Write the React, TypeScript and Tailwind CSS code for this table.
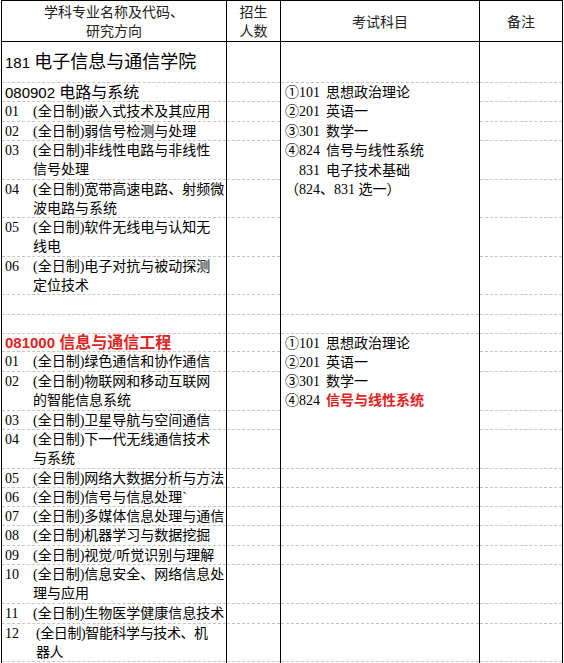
import React from "react";

const dash = "border-b border-dashed border-[#c6c6c6]";
const red = "text-[#e02424] font-bold";

type Exam = "skip" | { span: number; body: React.ReactNode } | undefined;

interface Row {
  h: number;
  left: React.ReactNode;
  exam?: Exam;
}

const Item = ({ no, lines, shift }: { no: string; lines: string[]; shift?: boolean }) => (
  <div className="flex text-[14px] leading-[19px]">
    <span className="w-[28px] shrink-0">{no}</span>
    <div className={shift ? "whitespace-nowrap pl-[3px] tracking-[-0.4px]" : "whitespace-nowrap"}>
      {lines.map((l, i) => (
        <div key={i}>{l}</div>
      ))}
    </div>
  </div>
);

const ExamLine = ({ mark, code, children }: { mark: string; code: string; children: React.ReactNode }) => (
  <div className="flex whitespace-nowrap">
    <span>{mark}</span>
    <span>{code}</span>
    <span className="ml-[6px]">{children}</span>
  </div>
);

const block1 = (
  <div className="pl-[4px] text-[14px] leading-[19.4px]">
    <ExamLine mark="①" code="101">思想政治理论</ExamLine>
    <ExamLine mark="②" code="201">英语一</ExamLine>
    <ExamLine mark="③" code="301">数学一</ExamLine>
    <ExamLine mark="④" code="824">信号与线性系统</ExamLine>
    <ExamLine mark="　" code="831">电子技术基础</ExamLine>
    <div className="whitespace-nowrap">（824、831 选一）</div>
  </div>
);

const block2 = (
  <div className="pl-[4px] text-[14px] leading-[19px]">
    <ExamLine mark="①" code="101">思想政治理论</ExamLine>
    <ExamLine mark="②" code="201">英语一</ExamLine>
    <ExamLine mark="③" code="301">数学一</ExamLine>
    <ExamLine mark="④" code="824">
      <span className={red}>信号与线性系统</span>
    </ExamLine>
  </div>
);

const rows: Row[] = [
  {
    h: 41,
    left: (
      <div className="whitespace-nowrap">
        <span className="font-['Liberation_Sans'] text-[15px]">181 </span>
        <span className="text-[18px]">电子信息与通信学院</span>
      </div>
    ),
  },
  {
    h: 19,
    left: (
      <div className="whitespace-nowrap leading-[19px]">
        <span className="font-['Liberation_Sans'] text-[15px]">080902 </span>
        <span className="text-[16px]">电路与系统</span>
      </div>
    ),
    exam: { span: 8, body: block1 },
  },
  { h: 20, left: <Item no="01" lines={["(全日制)嵌入式技术及其应用"]} />, exam: "skip" },
  { h: 19, left: <Item no="02" lines={["(全日制)弱信号检测与处理"]} />, exam: "skip" },
  { h: 39, left: <Item no="03" lines={["(全日制)非线性电路与非线性", "信号处理"]} />, exam: "skip" },
  { h: 38, left: <Item no="04" lines={["(全日制)宽带高速电路、射频微", "波电路与系统"]} />, exam: "skip" },
  { h: 39, left: <Item no="05" lines={["(全日制)软件无线电与认知无", "线电"]} />, exam: "skip" },
  { h: 38, left: <Item no="06" lines={["(全日制)电子对抗与被动探测", "定位技术"]} />, exam: "skip" },
  { h: 20, left: null },
  { h: 19, left: null },
  {
    h: 18,
    left: (
      <div className={`whitespace-nowrap leading-[18px] ${red}`}>
        <span className="font-['Liberation_Sans'] text-[15px]">081000 </span>
        <span className="text-[16px]">信息与通信工程</span>
      </div>
    ),
    exam: { span: 5, body: block2 },
  },
  { h: 20, left: <Item no="01" lines={["(全日制)绿色通信和协作通信"]} />, exam: "skip" },
  { h: 39, left: <Item no="02" lines={["(全日制)物联网和移动互联网", "的智能信息系统"]} />, exam: "skip" },
  { h: 19, left: <Item no="03" lines={["(全日制)卫星导航与空间通信"]} />, exam: "skip" },
  { h: 39, left: <Item no="04" lines={["(全日制)下一代无线通信技术", "与系统"]} />, exam: "skip" },
  { h: 19, left: <Item no="05" lines={["(全日制)网络大数据分析与方法"]} /> },
  { h: 19, left: <Item no="06" lines={["(全日制)信号与信息处理`"]} /> },
  { h: 19, left: <Item no="07" lines={["(全日制)多媒体信息处理与通信"]} /> },
  { h: 20, left: <Item no="08" lines={["(全日制)机器学习与数据挖掘"]} /> },
  { h: 19, left: <Item no="09" lines={["(全日制)视觉/听觉识别与理解"]} /> },
  { h: 39, left: <Item no="10" lines={["(全日制)信息安全、网络信息处", "理与应用"]} /> },
  { h: 20, left: <Item no="11" lines={["(全日制)生物医学健康信息技术"]} /> },
  { h: 38, left: <Item no="12" lines={["(全日制)智能科学与技术、机", "器人"]} shift /> },
  { h: 20, left: null },
];

export default function App() {
  return (
    <div className="h-[663px] w-[564px] overflow-hidden bg-white font-['Liberation_Serif','Noto_Sans_CJK_SC',sans-serif] text-black">
      <table className="ml-[1px] table-fixed border-collapse border-t border-black">
        <colgroup>
          <col className="w-[225px] border-l border-r border-black" />
          <col className="w-[54px] border-l border-r border-black" />
          <col className="w-[199px] border-l border-r border-black" />
          <col className="w-[83px] border-l border-r border-black" />
        </colgroup>
        <thead>
          <tr className="h-[40px]">
            <th className="border-b border-black p-0 pt-[2px] align-top text-[14px] font-normal leading-[19px] text-[#222]">
              学科专业名称及代码、
              <br />
              研究方向
            </th>
            <th className="border-b border-black p-0 pt-[2px] align-top text-[14px] font-normal leading-[19px] text-[#222]">
              招生
              <br />
              人数
            </th>
            <th className="border-b border-black p-0 pt-[12px] align-top text-[14px] font-normal leading-[19px] text-[#222]">
              考试科目
            </th>
            <th className="border-b border-black p-0 pt-[12px] align-top text-[14px] font-normal leading-[19px] text-[#222]">
              备注
            </th>
          </tr>
        </thead>
        <tbody>
          {rows.map((r, i) => (
            <tr key={i} style={{ height: r.h }}>
              <td className={`${dash} p-0 pl-[3px]`}>
                {/* fixed box so the text never pushes the row taller */}
                <div className="flex items-center" style={{ height: r.h - 1 }}>
                  {r.left}
                </div>
              </td>
              <td className={`${dash} p-0`} />
              {r.exam === "skip" ? null : r.exam ? (
                <td rowSpan={r.exam.span} className={`${dash} p-0 align-top`}>
                  {r.exam.body}
                </td>
              ) : (
                <td className={`${dash} p-0`} />
              )}
              <td className={`${dash} p-0`} />
            </tr>
          ))}
        </tbody>
      </table>
    </div>
  );
}
